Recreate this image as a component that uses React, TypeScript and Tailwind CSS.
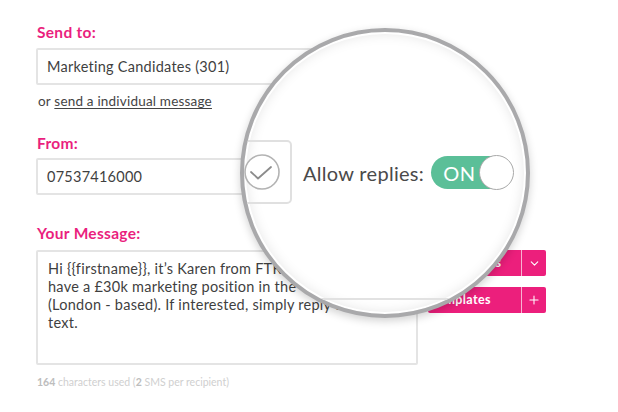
import { ChevronDown, Plus } from "lucide-react";

const FONT = { fontFamily: "Lato, 'Open Sans', sans-serif" };

// ── Magnifier lens over the "Allow replies" toggle ─────────────────────────
function Lens() {
  return (
    <div className="absolute left-[240px] top-[28px] w-[290px] h-[290px] rounded-full border-4 border-[#a9a9ab] bg-white overflow-hidden shadow-[0_3px_8px_rgba(0,0,0,0.18),inset_0_0_0_2px_#ffffff,inset_0_0_14px_rgba(0,0,0,0.13)]">
      {/* magnified "From" input edge */}
      <div className="absolute left-[-62px] top-[108px] w-[110px] h-[64px] border-2 border-[#e0e0e0] rounded-[5px]" />
      <svg className="absolute left-[-1px] top-[121px]" width="38" height="38" viewBox="0 0 38 38">
        <circle cx="19" cy="19" r="17" fill="white" stroke="#b3b3b3" strokeWidth="1.6" />
        <polyline points="8,19 15,25.5 28,14" fill="none" stroke="#8c8c8c" strokeWidth="1.8" strokeLinecap="round" strokeLinejoin="round" />
      </svg>

      <div className="absolute left-[59px] top-[124px] h-[33px] flex items-center gap-[7px]">
        <span className="text-[20px] text-[#4a4a4a] whitespace-nowrap tracking-[0.3px]">Allow replies:</span>
        <div className="relative w-[82px] h-[33px] rounded-full bg-[#5bbf98]">
          <span className="absolute left-[12px] top-0 h-full flex items-center text-[20px] text-white tracking-[0.5px]">ON</span>
          <div className="absolute right-[-1px] top-[-1px] w-[35px] h-[35px] rounded-full bg-white border-[1.5px] border-[#a8a8a8]" />
        </div>
      </div>

      {/* magnified textarea top edge */}
      <div className="absolute left-0 right-0 top-[266px] h-[2px] bg-[#e2e2e2]" />
    </div>
  );
}

function SplitButton({ label, icon }: { label: string; icon: React.ReactNode }) {
  return (
    <div className="flex h-[26px] rounded-[2px] overflow-hidden">
      <div className="w-[93px] bg-[#ec1f7c] flex items-center pl-[3px] text-[12.5px] font-bold text-white whitespace-nowrap tracking-[0.4px]">
        {label}
      </div>
      <div className="w-[1px] bg-[#f7b3d1]" />
      <div className="w-[24px] bg-[#ec1f7c] flex items-center justify-center text-white">{icon}</div>
    </div>
  );
}

export default function App() {
  return (
    <div className="relative w-[618px] h-[412px] bg-white overflow-hidden" style={FONT}>
      <div className="pl-[36px] pt-[23px] flex flex-col">
        <div className="pl-[1px] text-[15.5px] font-bold text-[#ea1f7e] leading-[18px] tracking-[0.3px]">Send to:</div>
        <div className="mt-[7px] w-[382px] h-[37px] border-2 border-[#e4e4e4] flex items-center pl-[9px] text-[14.5px] text-[#3f3f3f] rounded-[2px] tracking-[0.25px]">
          Marketing Candidates (301)
        </div>
        <div className="mt-[8px] pl-[2px] text-[13.5px] text-[#444] leading-[16px] tracking-[0.2px]">
          or <span className="underline underline-offset-2">send a individual message</span>
        </div>

        <div className="mt-[25px] pl-[1px] text-[15.5px] font-bold text-[#ea1f7e] leading-[18px] tracking-[0.3px]">From:</div>
        <div className="mt-[6px] w-[382px] h-[37px] border-2 border-[#e4e4e4] flex items-center pl-[9px] text-[14.5px] text-[#3f3f3f] rounded-[2px] tracking-[0.25px]">
          07537416000
        </div>

        <div className="mt-[29px] pl-[1px] text-[15.5px] font-bold text-[#ea1f7e] leading-[18px] tracking-[0.3px]">Your Message:</div>
        <div className="mt-[8px] flex gap-[6px]">
          <div className="w-[382px] h-[115px] border-2 border-[#e4e4e4] rounded-[2px] pl-[10px] pt-[8px] text-[14.5px] text-[#3f3f3f] leading-[18px] overflow-hidden tracking-[0.25px]">
            <div className="whitespace-nowrap">Hi {"{{firstname}}"}, it’s Karen from FTR Recruitment. We</div>
            <div className="whitespace-nowrap">have a £30k marketing position in the City of London</div>
            <div className="whitespace-nowrap">(London - based). If interested, simply reply to this</div>
            <div className="whitespace-nowrap">text.</div>
          </div>
          <div className="flex flex-col gap-[11px] pl-[4px]">
            <SplitButton label="Insert fields" icon={<ChevronDown size={13} strokeWidth={2} />} />
            <SplitButton label="Templates" icon={<Plus size={14} strokeWidth={1.8} />} />
          </div>
        </div>

        <div className="mt-[10px] pl-[1px] text-[10.5px] text-[#cfcfcf] leading-[14px]">
          <span className="font-bold text-[#bdbdbd]">164</span> characters used (<span className="font-bold text-[#bdbdbd]">2</span> SMS per recipient)
        </div>
      </div>
      <Lens />
    </div>
  );
}
